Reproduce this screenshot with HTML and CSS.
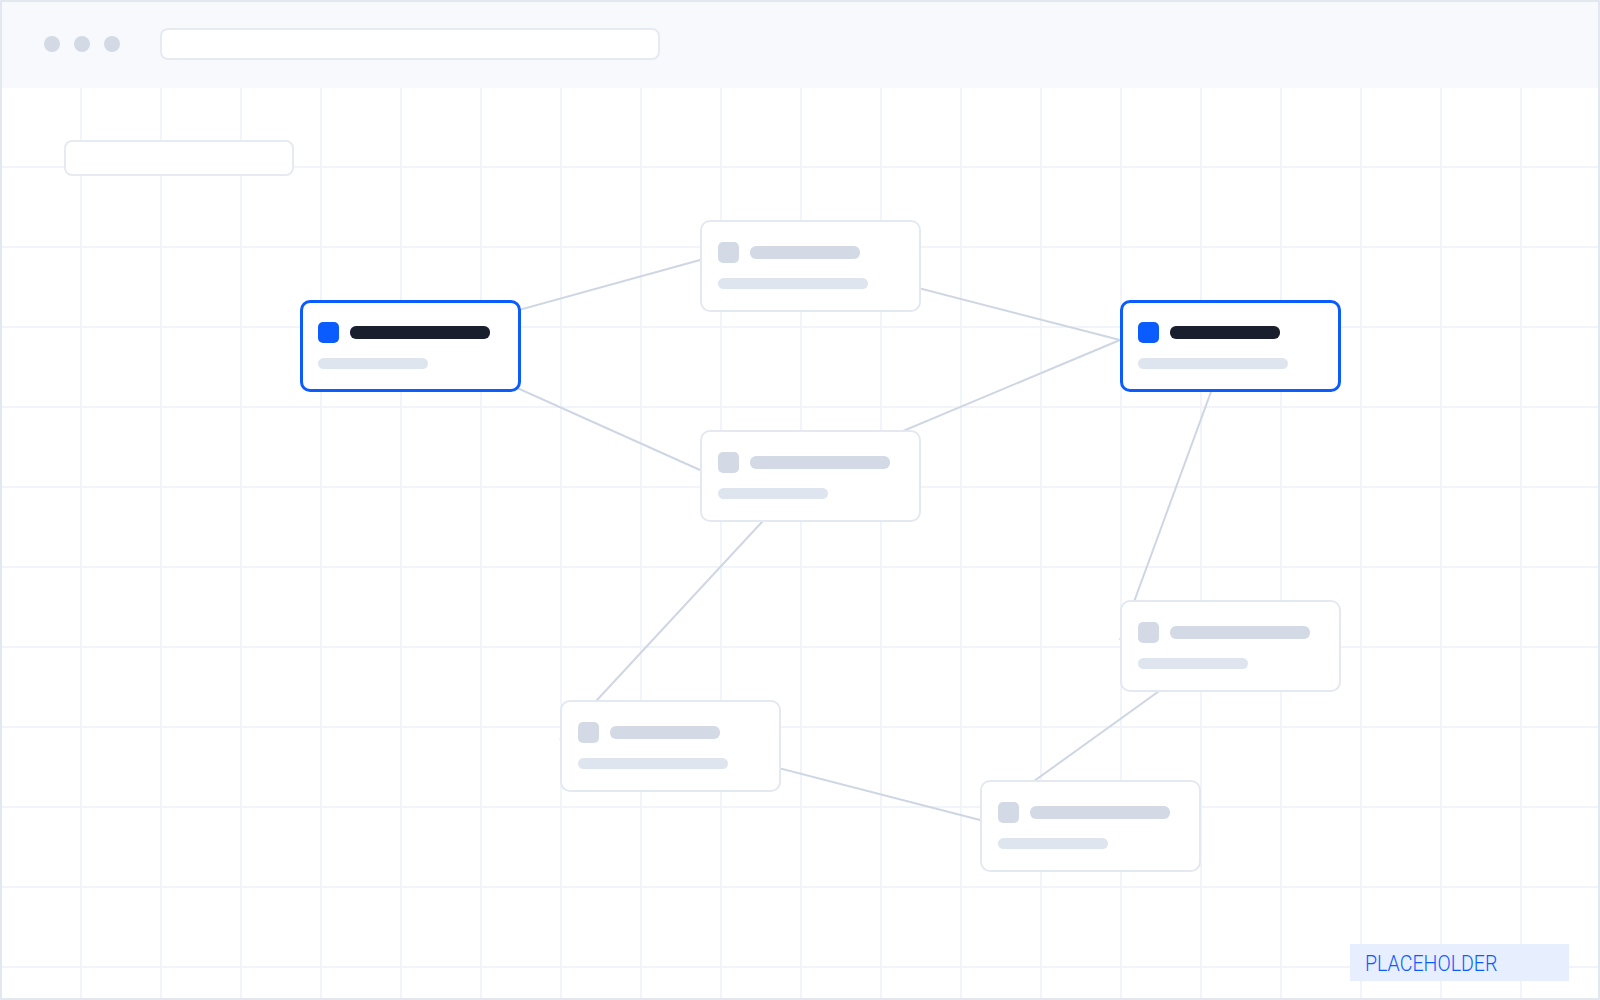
FILE: index.html
```html
<!DOCTYPE html>
<html>
<head>
    <title>Flow Editor</title>
    <link rel="stylesheet" href="styles.css">
</head>
<body>
  <div class="frame">
      <div class="topbar">
          <div class="dots"><span></span><span></span><span></span></div>
          <div class="address"></div>
      </div>

      <div class="canvas">
          <!-- edges go from the source centre to the target's left port -->
          <svg class="edges" width="1600" height="913">
              <line x1="410" y1="253" x2="700" y2="173"/>
              <line x1="410" y1="253" x2="700" y2="383"/>
              <line x1="810" y1="173" x2="1120" y2="253"/>
              <line x1="810" y1="383" x2="1120" y2="253"/>
              <line x1="810" y1="383" x2="560" y2="653"/>
              <line x1="1230" y1="253" x2="1120" y2="553"/>
              <line x1="1230" y1="553" x2="980" y2="733"/>
              <line x1="670" y1="653" x2="980" y2="733"/>
          </svg>

          <div class="toolbar"></div>

          <div class="node selected" style="left:300px;top:213px">
              <div class="node-head"><i class="node-icon"></i><b class="node-title w140"></b></div>
              <div class="node-sub w110"></div>
          </div>
          <div class="node" style="left:700px;top:133px">
              <div class="node-head"><i class="node-icon"></i><b class="node-title w110"></b></div>
              <div class="node-sub w150"></div>
          </div>
          <div class="node" style="left:700px;top:343px">
              <div class="node-head"><i class="node-icon"></i><b class="node-title w140"></b></div>
              <div class="node-sub w110"></div>
          </div>
          <div class="node selected" style="left:1120px;top:213px">
              <div class="node-head"><i class="node-icon"></i><b class="node-title w110"></b></div>
              <div class="node-sub w150"></div>
          </div>
          <div class="node" style="left:1120px;top:513px">
              <div class="node-head"><i class="node-icon"></i><b class="node-title w140"></b></div>
              <div class="node-sub w110"></div>
          </div>
          <div class="node" style="left:560px;top:613px">
              <div class="node-head"><i class="node-icon"></i><b class="node-title w110"></b></div>
              <div class="node-sub w150"></div>
          </div>
          <div class="node" style="left:980px;top:693px">
              <div class="node-head"><i class="node-icon"></i><b class="node-title w140"></b></div>
              <div class="node-sub w110"></div>
          </div>

          <div class="badge"><span>PLACEHOLDER</span></div>
      </div>
  </div>
</body>
</html>
```

FILE: styles.css
```css
  body {
      margin: 0;
      background-color: #fff;
      font-family: Roboto, "Liberation Sans", sans-serif;
  }

  .frame {
      position: relative;
      width: 1600px;
      height: 1000px;
      display: flex;
      flex-direction: column;
      overflow: hidden;
  }

  /* outer border sits above everything */
  .frame::after {
      content: "";
      position: absolute;
      inset: 0;
      border: 2px solid #e3e8f0;
      pointer-events: none;
  }

  .topbar {
      height: 88px;
      flex: none;
      display: flex;
      align-items: center;
      padding-left: 44px;
      background-color: #f7f9fc;
  }

  .dots {
      display: flex;
      gap: 14px;
  }

  .dots span {
      width: 16px;
      height: 16px;
      border-radius: 50%;
      background-color: #d3dae6;
  }

  .address {
      width: 500px;
      height: 32px;
      margin-left: 40px;
      box-sizing: border-box;
      background-color: #fff;
      border: 2px solid #e6eaf1;
      border-radius: 8px;
  }

  .canvas {
      position: relative;
      flex: 1;
      background-color: #fff;
      background-image:
          linear-gradient(to right, #f1f4f9 2px, transparent 2px),
          linear-gradient(to bottom, #f1f4f9 2px, transparent 2px);
      background-size: 80px 80px;
      background-position: 0 78px;
  }

  .edges {
      position: absolute;
      left: 0;
      top: -1px;
  }

  .edges line {
      stroke: #cfd6e3;
      stroke-width: 2;
  }

  .toolbar {
      position: absolute;
      left: 64px;
      top: 52px;
      width: 230px;
      height: 36px;
      box-sizing: border-box;
      background-color: #fff;
      border: 2px solid #e6eaf1;
      border-radius: 8px;
  }

  .node {
      position: absolute;
      width: 221px;
      height: 92px;
      margin-top: -1px;
      box-sizing: border-box;
      padding: 20px 0 0 16px;
      background-color: #fff;
      border: 2px solid #e4e8f0;
      border-radius: 10px;
  }

  .node.selected {
      border: 3px solid #0b5cff;
      padding: 19px 0 0 15px;
  }

  .node-head {
      display: flex;
      align-items: center;
      gap: 11px;
      height: 21px;
  }

  .node-icon {
      width: 21px;
      height: 21px;
      border-radius: 5px;
      background-color: #d3dae6;
  }

  .node-title {
      height: 13px;
      border-radius: 6px;
      background-color: #d3dae6;
  }

  .node-sub {
      height: 11px;
      margin-top: 15px;
      border-radius: 6px;
      background-color: #dfe5ef;
  }

  .selected .node-icon {
      background-color: #0b5cff;
  }

  .selected .node-title {
      background-color: #1a1f2e;
  }

  .w110 { width: 110px; }
  .w140 { width: 140px; }
  .w150 { width: 150px; }

  .badge {
      position: absolute;
      right: 31px;
      bottom: 19px;
      width: 219px;
      height: 37px;
      box-sizing: border-box;
      padding-left: 15px;
      background-color: #e7eefd;
  }

  .badge span {
      display: inline-block;
      font-size: 22px;
      font-weight: 300;
      line-height: 39px;
      color: #0b5cff;
      transform: scaleX(0.89);
      transform-origin: left center;
  }
```
